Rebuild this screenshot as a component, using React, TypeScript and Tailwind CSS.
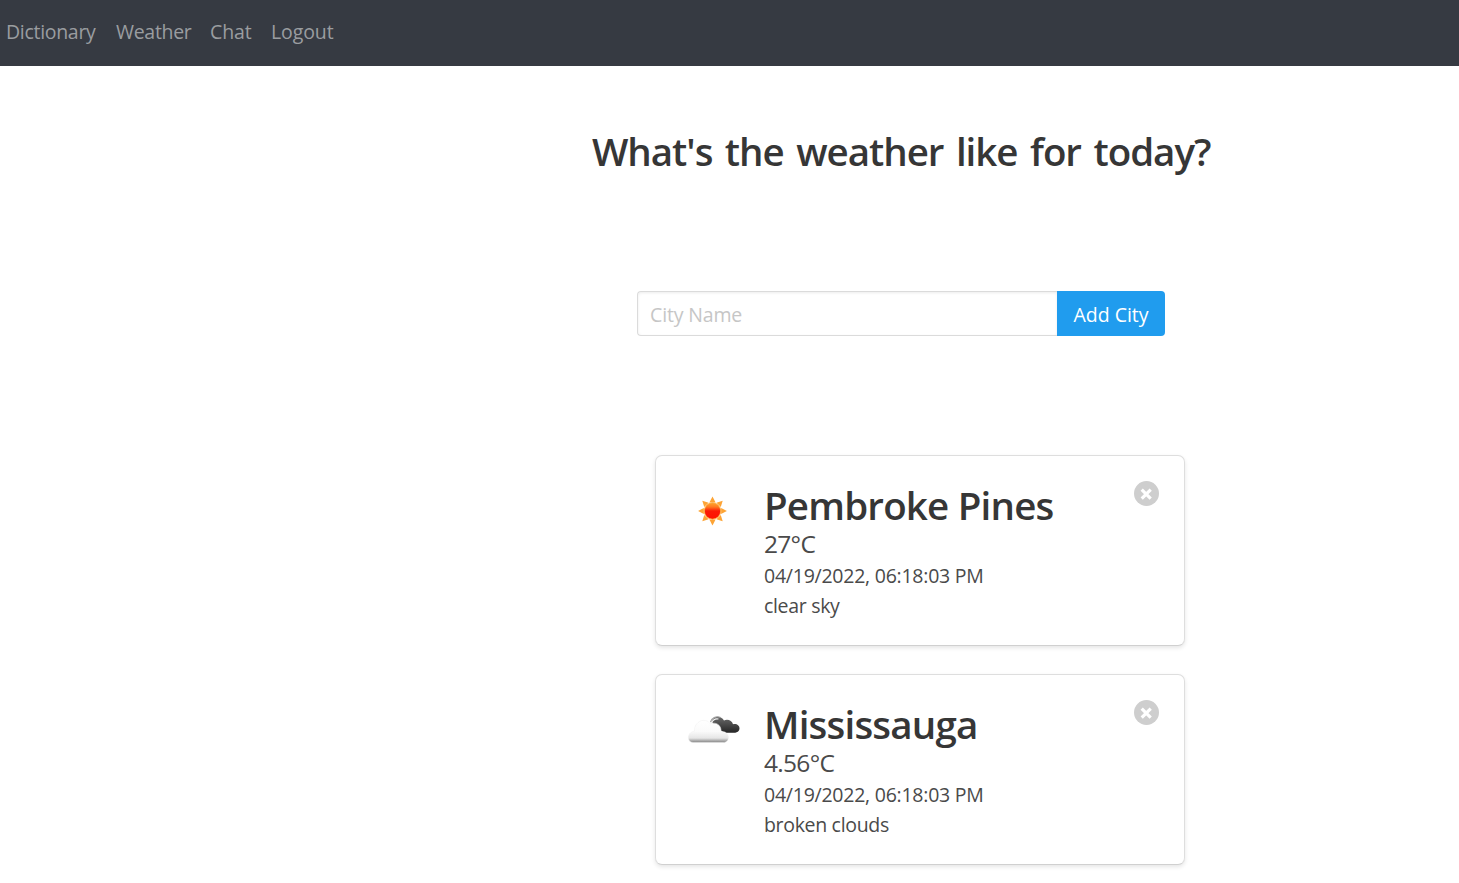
import React from "react";

function SunIcon() {
  return (
    <svg viewBox="0 0 30 30" className="size-[30px]">
      <defs>
        <linearGradient id="sun" x1="0" y1="0" x2="0" y2="1">
          <stop offset="0" stopColor="#ffa52a" />
          <stop offset="0.25" stopColor="#ff7a20" />
          <stop offset="0.5" stopColor="#fb1a06" />
          <stop offset="1" stopColor="#ff1200" />
        </linearGradient>
      </defs>
      {[0, 45, 90, 135, 180, 225, 270, 315].map((a) => (
        <path key={a} d="M14.5 .6 17.6 6.4H11.4Z" fill="#fda435" transform={`rotate(${a} 14.5 15)`} />
      ))}
      <circle cx="14.5" cy="15" r="8.2" fill="url(#sun)" stroke="#fdac3c" strokeWidth=".9" />
    </svg>
  );
}

function CloudsIcon() {
  return (
    <svg viewBox="0 0 54 32" className="mb-0.5 ml-0.5 h-8 w-[54px] shrink-0">
      <defs>
        <linearGradient id="dark" x1="0" y1="0" x2="0" y2="1">
          <stop offset="0" stopColor="#6a6a6a" />
          <stop offset="0.5" stopColor="#484848" />
          <stop offset="1" stopColor="#252525" />
        </linearGradient>
        <linearGradient id="light" x1="0" y1="0" x2="0" y2="1">
          <stop offset="0" stopColor="#ffffff" />
          <stop offset="0.5" stopColor="#fafafa" />
          <stop offset="0.8" stopColor="#e6e6e6" />
          <stop offset="0.9" stopColor="#b4b4b4" />
          <stop offset="1" stopColor="#848484" />
        </linearGradient>
      </defs>
      <path d="M24.5 8.5C26 3.4 33.5 1.5 37 7.5 40.5 5.7 45 7.4 46 11.2 49.4 10.2 52.5 12.3 52.5 15.3 52.5 18.3 50 19.8 47 19.8H37L27 12Z" fill="url(#dark)" />
      <path d="M23.4 9.2C24.5 4.8 29 2.6 33.6 4.4" fill="none" stroke="#a0a0a0" strokeWidth="1.1" />
      <path d="M24.6 10C25.8 6.8 28.5 5.4 31.5 6" fill="none" stroke="#f2f2f2" strokeWidth="1.2" />
      <path d="M6 29.5C-.3 29.5-.5 19 7.5 18.2 7 8 18.5 3.8 23.2 10.8 29 8.6 34.6 12 34 18.5 43 17.5 43.8 29.5 36.5 29.5Z" fill="url(#light)" stroke="#eeeeee" strokeWidth=".5" />
    </svg>
  );
}

type CardProps = {
  city: string;
  temp: string;
  sky: string;
  icon: React.ReactNode;
};

function WeatherCard({ city, temp, sky, icon }: CardProps) {
  return (
    <article className="flex h-[191px] w-[530px] rounded-[7px] border border-[#dedede] border-b-[#d0d0d0] bg-white pl-[30px] pr-[25px] pt-[25px] shadow-[0_2px_4px_rgba(0,0,0,0.1)]">
      <div className="flex h-[60px] w-[54px] items-center justify-center">{icon}</div>
      <div className="ml-6 flex-1 whitespace-nowrap text-[#4a4a4a]">
        <h2 className="h-[46px] text-[38.5px] font-semibold leading-[49px] tracking-[-0.8px] text-[#363636]">{city}</h2>
        <p className="h-[34px] text-[24.5px] leading-[34px] tracking-[-0.7px]">{temp}</p>
        <p className="h-[30px] text-[19.5px] leading-[30px] tracking-[-0.24px]">04/19/2022, 06:18:03 PM</p>
        <p className="h-[30px] text-[19.5px] leading-[30px] tracking-[-0.32px]">{sky}</p>
      </div>
      <button aria-label="Remove city" className="size-[25px]">
        <svg viewBox="0 0 25 25" className="size-[25px]">
          <circle cx="12.5" cy="12.5" r="12.5" fill="#cecece" />
          <path d="M7.7 8.6 16.7 17.6M16.7 8.6 7.7 17.6" stroke="white" strokeWidth="3.2" />
        </svg>
      </button>
    </article>
  );
}

export default function App() {
  return (
    <div className="h-[883px] overflow-hidden bg-white font-['Open_Sans','Noto_Sans',sans-serif]">
      <nav className="flex h-[66px] items-center bg-[#363a42] pl-1.5 text-[19.5px] tracking-[-0.3px] text-[#9a9da0]">
        <a className="mr-5 w-[90px] whitespace-nowrap pb-0.5">Dictionary</a>
        <a className="mr-5 w-[74px] whitespace-nowrap pb-0.5">Weather</a>
        <a className="mr-5 w-[41px] whitespace-nowrap pb-0.5 tracking-[-0.1px]">Chat</a>
        <a className="whitespace-nowrap pb-0.5 tracking-[-0.1px]">Logout</a>
      </nav>
      <main className="pl-[592px]">
        <h1 className="mt-[60px] h-[50px] whitespace-nowrap text-[38.5px] font-semibold leading-[50px] tracking-[-1.02px] text-[#363636] [word-spacing:3.5px]">
          What's the weather like for today?
        </h1>
        <form className="ml-[45px] mt-[115px] flex h-[45px] w-[528px]">
          <input
            placeholder="City Name"
            className="w-[420px] rounded-l-[4px] border border-r-0 border-[#dbdbdb] px-3 pt-0.5 text-[19.5px] tracking-[-0.15px] shadow-[inset_0_1px_3px_rgba(10,10,10,0.08)] outline-none placeholder:text-[#c6c6c6]"
          />
          <button type="button" className="w-[108px] whitespace-nowrap rounded-r-[4px] bg-[#209cee] pt-0.5 text-[19.5px] text-white">
            Add City
          </button>
        </form>
        <section className="ml-[63px] mt-[119px] flex flex-col gap-7">
          <WeatherCard city="Pembroke Pines" temp="27°C" sky="clear sky" icon={<SunIcon />} />
          <WeatherCard city="Mississauga" temp="4.56°C" sky="broken clouds" icon={<CloudsIcon />} />
        </section>
      </main>
    </div>
  );
}
